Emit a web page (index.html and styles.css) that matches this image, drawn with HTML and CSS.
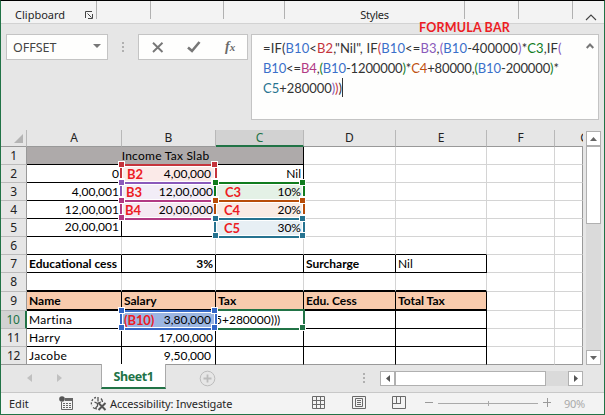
FILE: index.html
```html
<!DOCTYPE html>
<html lang="en">
<head>
<meta charset="utf-8">
<title>Income Tax Slab</title>
<link rel="stylesheet" href="styles.css">
</head>
<body>
<div class="window">
  <header class="ribbon">
    <div class="group g-clip"><span>Clipboard</span>
      <svg width="8" height="8" viewBox="0 0 8 8" fill="none" stroke="#444"><path d="M.5 7V.5H7M2.500 2.500L6.500 6.500M7.500 3V7.500H3"/></svg>
    </div>
    <div class="group g-2"></div>
    <div class="group g-3"></div>
    <div class="group g-4"></div>
    <div class="group g-styles"><span>Styles</span></div>
    <div class="group g-6"></div>
    <div class="group g-7"></div>
    <svg class="collapse" width="12" height="7" viewBox="0 0 12 7" fill="none" stroke="#444" stroke-width="1.1"><path d="M1 6L6 1l5 5"/></svg>
    <b class="callout">FORMULA BAR</b>
  </header>

  <section class="formula-row">
    <div class="box name-box"><span>OFFSET</span><svg width="8" height="4" viewBox="0 0 8 4"><path d="M0 0h8L4 4z" fill="#777"/></svg></div>
    <div class="dots"><i></i><i></i><i></i></div>
    <div class="box actions">
      <svg width="12" height="11" viewBox="0 0 12 11" fill="none" stroke="#777" stroke-width="1.900"><path d="M1 .8L10.500 10M10.500 .8L1 10"/></svg>
      <svg width="14" height="12" viewBox="0 0 14 12" fill="none" stroke="#777" stroke-width="2.600"><path d="M1 6.500L5 10 12.500 1"/></svg>
      <span class="fx">f<small>x</small></span>
    </div>
    <div class="box formula">
      <div class="code">
        <div class="line l1">=IF(<span class="blue">B10</span>&lt;<span class="red">B2</span>,"Nil", IF<span class="red">(</span><span class="blue">B10</span>&lt;=<span class="purple">B3</span>,<span class="purple">(</span><span class="blue">B10</span>-400000<span class="purple">)</span>*<span class="green">C3</span>,IF<span class="purple">(</span></div>
        <div class="line l2"><span class="blue">B10</span>&lt;=<span class="pink">B4</span>,<span class="green">(</span><span class="blue">B10</span>-1200000<span class="green">)</span>*<span class="orange">C4</span>+80000,<span class="green">(</span><span class="blue">B10</span>-200000<span class="green">)</span>*</div>
        <div class="line l3"><span class="teal">C5</span>+280000<span class="purple">)</span><span class="red">)</span>)<i class="caret"></i></div>
      </div>
      <svg width="8" height="6" viewBox="0 0 8 6" fill="none" stroke="#777" stroke-width="2"><path d="M.7 5L4 1.500 7.300 5"/></svg>
    </div>
  </section>

  <main class="work">
    <div class="sheet">
      <div class="hd corner"><svg width="9" height="9" viewBox="0 0 9 9"><path d="M9 0v9H0z" fill="#b4b4b4"/></svg></div>
      <div class="hd">A</div><div class="hd">B</div><div class="hd on">C</div><div class="hd">D</div><div class="hd">E</div><div class="hd">F</div><div class="hd g"><span>G</span></div>

      <div class="rh">1</div><div class="c k title">Income Tax Slab</div><div class="c"></div><div class="c"></div><div class="c"></div><div class="c g"></div>

      <div class="rh">2</div><div class="c k n">0</div>
      <div class="c k n in f-red"><b class="tag t1">B2</b>4,00,000</div>
      <div class="c k n">Nil</div><div class="c"></div><div class="c"></div><div class="c"></div><div class="c g"></div>

      <div class="rh">3</div><div class="c k n">4,00,001</div>
      <div class="c k n in2 f-purple"><b class="tag t2">B3</b>12,00,000<div class="range r-red up"><i></i><i></i><i></i><i></i></div></div>
      <div class="c k n f-green"><b class="tag t3">C3</b>10%</div><div class="c"></div><div class="c"></div><div class="c"></div><div class="c g"></div>

      <div class="rh">4</div><div class="c k n">12,00,001</div>
      <div class="c k n in2 f-pink"><b class="tag t4">B4</b>20,00,000<div class="range r-purple up"><i></i><i></i><i></i><i></i></div><div class="range r-pink"><i></i><i></i><i></i><i></i></div></div>
      <div class="c k n f-orange"><b class="tag t5">C4</b>20%<div class="range r-green up"><i></i><i></i><i></i><i></i></div><div class="range r-orange"><i></i><i></i><i></i><i></i></div></div><div class="c"></div><div class="c"></div><div class="c"></div><div class="c g"></div>

      <div class="rh">5</div><div class="c k n hi">20,00,001</div><div class="c k"></div>
      <div class="c k n f-teal"><b class="tag t5">C5</b>30%<div class="range r-teal"><i></i><i></i><i></i><i></i></div></div><div class="c"></div><div class="c"></div><div class="c"></div><div class="c g"></div>

      <div class="rh">6</div><div class="c kb"></div><div class="c kb"></div><div class="c kb"></div><div class="c kb"></div><div class="c kb"></div><div class="c"></div><div class="c g"></div>

      <div class="rh">7</div><div class="c k b">Educational cess</div><div class="c k b n">3%</div><div class="c k"></div><div class="c k b">Surcharge</div><div class="c k">Nil</div><div class="c"></div><div class="c g"></div>

      <div class="rh">8</div><div class="c thick"></div><div class="c thick"></div><div class="c thick"></div><div class="c thick"></div><div class="c thick"></div><div class="c"></div><div class="c g"></div>

      <div class="rh">9</div><div class="c k thick b h">Name</div><div class="c k thick b h">Salary</div><div class="c k thick b h">Tax</div><div class="c k thick b h">Edu. Cess</div><div class="c k thick b h">Total Tax</div><div class="c"></div><div class="c g"></div>

      <div class="rh on">10</div><div class="c k name">Martina</div>
      <div class="c k n in f-blue"><b class="tag t6">(B10)</b>3,80,000</div>
      <div class="c k edit"><span>5+280000)))</span><div class="editing"><i></i></div><div class="range r-blue left"><i></i><i></i><i></i><i></i></div></div><div class="c k"></div><div class="c k"></div><div class="c"></div><div class="c g"></div>

      <div class="rh">11</div><div class="c k name">Harry</div><div class="c k n">17,00,000</div><div class="c k"></div><div class="c k"></div><div class="c k"></div><div class="c"></div><div class="c g"></div>
      <div class="rh last">12</div><div class="c k last name">Jacobe</div><div class="c k last n in">9,50,000</div><div class="c k last"></div><div class="c k last"></div><div class="c k last"></div><div class="c last"></div><div class="c g last"></div>
    </div>
    <div class="vscroll">
      <div class="btn"><svg width="7" height="4" viewBox="0 0 7 4"><path d="M0 4h7L3.500 0z" fill="#666"/></svg></div>
      <div class="thumb"></div>
      <div class="btn end"><svg width="7" height="4" viewBox="0 0 7 4"><path d="M0 0h7L3.500 4z" fill="#666"/></svg></div>
    </div>
  </main>

  <nav class="tabs">
    <svg class="prev" width="5" height="8" viewBox="0 0 5 8"><path d="M5 0v8L0 4z" fill="#c0c0c0"/></svg>
    <svg class="next" width="5" height="8" viewBox="0 0 5 8"><path d="M0 0v8l5-4z" fill="#c0c0c0"/></svg>
    <div class="tab">Sheet1</div>
    <svg class="add" width="17" height="17" viewBox="0 0 17 17" fill="none" stroke="#bcbcbc"><circle cx="8.500" cy="8.500" r="7.300"/><path d="M8.500 4.500v8M4.500 8.500h8" stroke-width="1.800"/></svg>
    <div class="dots"><i></i><i></i><i></i></div>
    <div class="hscroll">
      <div class="btn"><svg width="4" height="7" viewBox="0 0 4 7"><path d="M4 0v7L0 3.500z" fill="#555"/></svg></div>
      <div class="thumb"></div>
      <div class="btn end"><svg width="4" height="7" viewBox="0 0 4 7"><path d="M0 0v7l4-3.500z" fill="#555"/></svg></div>
    </div>
  </nav>

  <footer class="status">
    <span class="mode">Edit</span>
    <svg class="macro" width="14" height="14" viewBox="0 0 14 14"><path d="M6 2.500h7.500v11h-11V6" fill="none" stroke="#666"/><path d="M6 2h8v3H6z" fill="#666"/><circle cx="3" cy="3" r="2.800" fill="#555"/><path d="M4 7.500h2M7 7.500h2M10 7.500h2M4 9.500h2M7 9.500h2M10 9.500h2M4 11.500h2M7 11.500h2M10 11.500h2" stroke="#666"/></svg>
    <svg class="acc" width="17" height="15" viewBox="0 0 17 15" fill="none" stroke="#555"><path d="M6 1.500A6 6 0 0 0 2 10" stroke-dasharray="2 1.500" stroke-width="1.300"/><path d="M3 11.500a6 6 0 0 0 4 1.300M11 2.500A6 6 0 0 1 12.500 6" stroke-width="1.300"/><path d="M8 1v4.500M4.500 6l3 1.500v2.500l-2 2M8 7l3-1" stroke-width="1.300"/><path d="M8.500 7l7 7M15.500 7l-7 7" stroke-width="2"/></svg>
    <span class="acctext">Accessibility: Investigate</span>
    <svg class="v1" width="13" height="13" viewBox="0 0 13 13" fill="none" stroke="#6a6a6a"><path d="M.5.500h12v12H.5zM4.500 0v13M8.500 0v13M0 4.500h13M0 8.500h13"/></svg>
    <svg class="v2" width="14" height="13" viewBox="0 0 14 13" fill="none" stroke="#6a6a6a"><path d="M.5.500h13v12H.5zM3.500 2.500h7v8h-7zM5 4.500h4M5 6.500h4M5 8.500h4"/></svg>
    <svg class="v3" width="14" height="13" viewBox="0 0 14 13" fill="none" stroke="#6a6a6a"><path d="M.5.500h13v12H.5zM4.500 0v7.500M8.500 0v7.500M0 7.500h9"/></svg>
    <svg class="zoom" width="127" height="9" viewBox="0 0 127 9" fill="none" stroke="#aaa"><path d="M0 4.500h8M118 4.500h8M122.500 0v9" stroke="#999"/><path d="M13 5.500h100M63.500 3v5"/></svg>
    <span class="pct">90%</span>
  </footer>
</div>
</body>
</html>
```
FILE: styles.css
```css
* { box-sizing: border-box; }
body { margin: 0; }
svg { display: block; flex: none; }
i { font-style: normal; }

.window {
  width: 605px; height: 415px;
  display: flex; flex-direction: column;
  border: 1px solid #217346; border-top-color: #000;
  background: #e6e6e6; overflow: hidden;
  font-family: "Noto Sans", "Open Sans", sans-serif; color: #262626;
}

/* Ribbon */
.ribbon {
  flex: none; height: 23px; display: flex; position: relative;
  background: #f3f3f3; border-bottom: 1px solid #d2d2d2;
  font-size: 11px; line-height: 15px;
}
.group { height: 18px; border-right: 1px solid #b1b1b1; padding-top: 6px; flex: none; white-space: nowrap; }
.g-clip { width: 96px; padding-left: 14px; display: flex; }
.g-clip span { width: 70px; }
.g-clip svg { margin-top: 4px; }
.g-2 { width: 54px; } .g-3 { width: 73px; } .g-4 { width: 61px; }
.g-styles { width: 180px; text-align: center; letter-spacing: -.2px; }
.g-6, .g-7 { width: 54px; }
.collapse { margin: 13px 0 0 12px; }
.callout {
  position: absolute; left: 418px; top: 19px;
  font: bold 12.5px/16px Lato, sans-serif; letter-spacing: .2px; color: #ed1c24; white-space: nowrap;
}

/* Formula row */
.formula-row { flex: none; height: 106px; display: flex; align-items: flex-start; padding: 10px 0 0 5px; }
.box { background: #fefefd; border: 1px solid #c4c4c4; height: 26px; display: flex; align-items: center; flex: none; }
.name-box { width: 102px; padding: 0 6px 0 6px; justify-content: space-between; font-size: 12.5px; color: #444; }
.name-box svg { margin-top: -3px; }
.dots { display: flex; flex-direction: column; gap: 2px; }
.dots i { width: 2px; height: 2px; background: #b0b0b0; }
.formula-row .dots { margin: 8px 14px 0 14px; }
.actions { width: 110px; padding-left: 13px; }
.actions svg + svg { margin-left: 23px; }
.fx { margin-left: 24px; font: italic bold 14px/20px "Liberation Serif", serif; color: #6a6a6a; }
.fx small { font-size: 11px; }
.formula { width: 348px; height: 86px; margin-left: 3px; align-items: flex-start; padding: 3px 4px 0 11px; justify-content: space-between; }
.formula > svg { margin-top: 5px; }
.code { font: 13px/20px Lato, sans-serif; color: #333; }
.line { height: 20px; white-space: nowrap; }
.l1 { letter-spacing: .12px; } .l2 { letter-spacing: -.13px; } .l3 { letter-spacing: -.04px; }
.blue { color: #3a6fca; } .red { color: #c5343c; } .purple { color: #8a5abb; }
.green { color: #127c1e; } .pink { color: #b23a84; } .orange { color: #be5010; } .teal { color: #267390; }
.caret { display: inline-block; width: 1px; height: 19px; background: #333; vertical-align: top; }

/* Sheet */
.work { flex: none; height: 235px; display: flex; }
.sheet {
  display: grid; width: 582px;
  grid-template-columns: 26px 95px 94px 88px 92px 91px 68px 28px;
  grid-template-rows: 17px repeat(7, 18px) 19px 19px repeat(3, 18px);
  font: 12px/17px Lato, "Noto Sans", sans-serif; color: #000;
}
.hd, .rh { font-family: "Noto Sans", "Open Sans", sans-serif; text-align: center; color: #222; }
.hd { border-bottom: 1px solid #999; border-right: 1px solid #b8b8b8; font-size: 12px; line-height: 16px; }
.hd.on { background: #d2d2d2; color: #217346; border-bottom: 2px solid #217346; }
.corner { display: flex; justify-content: flex-end; align-items: flex-end; padding: 0 3px 3px 0; }
.hd.g { border-right: 0; overflow: hidden; text-align: right; }
.hd.g span { margin-right: -6px; }
.rh { border-right: 1px solid #999; border-bottom: 1px solid #bbb; font-size: 12px; letter-spacing: -.3px; }
.rh.on { background: #d2d2d2; color: #217346; border-right: 2px solid #217346; }
.c {
  position: relative; background: #fff; white-space: nowrap;
  border-right: 1px solid #d4d4d4; border-bottom: 1px solid #d4d4d4;
  padding: 0 2px 0 2px; display: flex; align-items: center; line-height: 16px;
}
.k { border-color: #000; }
.kb { border-bottom-color: #000; }
.c.thick { border-bottom: 2px solid #000; }
.c.g { border-right-color: #999; }
.last, .c.last { border-bottom-color: #999; }
.n { justify-content: flex-end; }
.hi { padding-bottom: 2px; }
.in { padding-right: 4px; }
.in2 { padding-right: 2px; }
.name { letter-spacing: .3px; }
.b { font-weight: bold; }
.h { background: #f8cbad; }
.title { grid-column: 2 / 5; background: #aeaaaa; justify-content: center; padding-left: 3px; letter-spacing: .25px; }

.tag { margin-right: auto; color: #ed1c24; font-size: 13px; letter-spacing: -.1px; position: relative; }
.t1 { margin-left: 3px; } .t2 { margin-left: 2px; } .t3 { margin-left: 7px; }
.t4 { margin-left: 1px; } .t5 { margin-left: 6px; } .t6 { margin-left: 0; }
.f-red { background: #fbeae8; } .f-purple { background: #f2edf7; } .f-pink { background: #f5e9f2; }
.f-green { background: #e4f1e6; } .f-orange { background: #f9ebe4; } .f-teal { background: #e7eff4; }
.f-blue { background: #9cb6e2; }

/* Reference outlines drawn over the grid lines */
.range {
  position: absolute; z-index: 2; left: -2px; right: -2px; top: -1px; bottom: -2px;
  border: 2px solid currentColor; box-shadow: inset 0 0 0 1px #fff;
}
.range.up { top: -19px; bottom: 16px; }
.range.left { left: -96px; right: 86px; }
.range i { position: absolute; width: 5px; height: 5px; background: currentColor; box-shadow: 0 0 0 1px #fff; }
.range i:nth-child(1) { left: -3px; top: -4px; }
.range i:nth-child(2) { right: -2px; top: -4px; }
.range i:nth-child(3) { left: -3px; bottom: -2px; }
.range i:nth-child(4) { right: -2px; bottom: -2px; }
.r-red { color: #c5343c; } .r-purple { color: #8a5abb; } .r-pink { color: #b23a84; }
.r-green { color: #107c1e; } .r-orange { color: #b84c08; } .r-teal { color: #267390; }
.r-blue { color: #3467c6; }
.edit { padding-left: 0; }
.edit span { display: block; width: 70px; overflow: hidden; text-indent: -3px; margin-left: 2px; }
.editing { position: absolute; z-index: 1; left: -1px; right: -2px; top: -2px; bottom: -2px; border: 2px solid #217346; }
.editing i { position: absolute; right: -2px; bottom: -2px; width: 5px; height: 5px; background: #217346; box-shadow: 0 0 0 1px #fff; }

/* Scroll bars */
.vscroll { width: 15px; height: 234px; margin: 1px 0 0 3px; background: #dadada; display: flex; flex-direction: column; }
.btn { flex: none; width: 15px; height: 15px; border: 1px solid #b0b0b0; background: #fff; display: flex; align-items: center; justify-content: center; }
.thumb { background: #fff; border: 1px solid #b0b0b0; }
.vscroll .thumb { height: 78px; }
.vscroll .end { margin-top: auto; }

/* Sheet tabs */
.tabs { flex: none; height: 27px; display: flex; position: relative; align-items: flex-start; }
.prev { margin: 9px 0 0 26px; }
.next { margin: 9px 0 0 25px; }
.tab {
  width: 65px; height: 25px; margin: -1px 0 0 39px; position: relative;
  background: #fff; border: 1px solid #aaa; border-width: 0 1px 2px; border-bottom-color: #217346;
  font-size: 12.5px; font-weight: bold; color: #217346; text-align: center; line-height: 26px; letter-spacing: -.4px;
}
.add { margin: 5px 0 0 33px; }
.tabs .dots { margin: 8px 15px 0 147px; gap: 2px; }
.hscroll { width: 203px; height: 15px; margin-top: 6px; background: #dadada; display: flex; }
.hscroll .thumb { width: 151px; }
.hscroll .end { margin-left: auto; }

/* Status bar */
.status {
  flex: 1; display: flex; align-items: flex-start; padding-left: 8px;
  background: #f3f3f3; border-top: 1px solid #c8c8c8; font-size: 11px; line-height: 19px;
}
.status span { white-space: nowrap; padding-top: 1px; }
.mode { width: 50px; }
.macro { margin-top: 3px; }
.acc { margin: 3px 0 0 17px; }
.acctext { width: 202px; margin-left: 3px; letter-spacing: -.12px; }
.v1 { margin-top: 3px; } .v2 { margin: 3px 0 0 27px; } .v3 { margin: 3px 0 0 26px; }
.zoom { margin: 5px 0 0 19px; }
.pct { margin-left: 12px; color: #aaa; letter-spacing: -.3px; }
```
